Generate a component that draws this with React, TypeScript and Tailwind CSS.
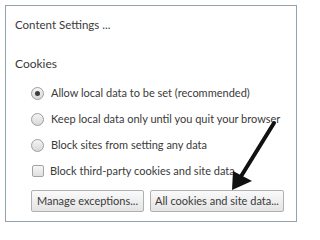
import React from "react";

const font = { fontFamily: 'Lato, "Noto Sans", sans-serif' };

function Radio({ checked, label }: { checked?: boolean; label: string }) {
  return (
    <div className="flex h-[26px] items-center">
      <span className="flex h-[13px] w-[13px] shrink-0 items-center justify-center rounded-full border border-[#9d9d9d] bg-gradient-to-b from-[#f4f4f4] to-[#d8d8d8]">
        {checked && <span className="h-[5px] w-[5px] rounded-full bg-[#3c3c3c]" />}
      </span>
      <span className="ml-[7px]">{label}</span>
    </div>
  );
}

export default function App() {
  return (
    <div className="relative h-[228px] w-[300px] whitespace-nowrap bg-white p-[5px] text-[11px] text-[#3a3a3a]" style={font}>
      <div className="h-[217px] w-[292px] border border-[#8fa3b3] pl-[9px] pt-[10px]">
        <div className="text-[11.5px] leading-[18px]">Content Settings ...</div>
        <div className="mt-[21px] text-[12px] leading-[18px]">Cookies</div>
        <div className="mt-[7px] pl-[16px]">
          <Radio checked label="Allow local data to be set (recommended)" />
          <Radio label="Keep local data only until you quit your browser" />
          <Radio label="Block sites from setting any data" />
          <div className="flex h-[26px] items-center">
            <span className="ml-[1px] h-[12px] w-[12px] shrink-0 rounded-[2px] border border-[#a3a3a3] bg-gradient-to-b from-[#f6f6f6] to-[#e0e0e0]" />
            <span className="ml-[6px]">Block third-party cookies and site data</span>
          </div>
          <div className="mt-[6px] flex gap-[6px]">
            <button className="h-[22px] w-[113px] rounded-[2px] border border-[#b0b0b0] bg-gradient-to-b from-[#fafafa] to-[#e4e4e4] text-[#3a3a3a]">
              Manage exceptions...
            </button>
            <button className="h-[22px] w-[134px] rounded-[2px] border border-[#b0b0b0] bg-gradient-to-b from-[#fafafa] to-[#e4e4e4] text-[#3a3a3a]">
              All cookies and site data...
            </button>
          </div>
        </div>
      </div>
      <svg className="absolute left-0 top-0" width="300" height="228" viewBox="0 0 300 228">
        <line x1="274" y1="123" x2="240" y2="178" stroke="#111" strokeWidth="4" strokeLinecap="round" />
        <polygon points="232,190 233,171 252,181" fill="#111" />
      </svg>
    </div>
  );
}
